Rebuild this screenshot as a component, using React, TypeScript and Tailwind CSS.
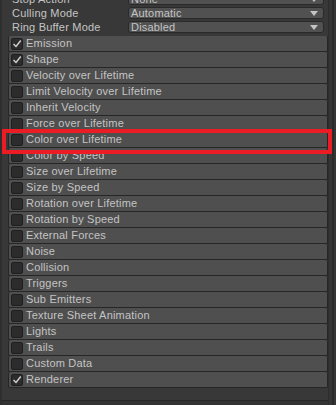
import React from "react";

const modules: { name: string; on: boolean }[] = [
  { name: "Emission", on: true },
  { name: "Shape", on: true },
  { name: "Velocity over Lifetime", on: false },
  { name: "Limit Velocity over Lifetime", on: false },
  { name: "Inherit Velocity", on: false },
  { name: "Force over Lifetime", on: false },
  { name: "Color over Lifetime", on: false },
  { name: "Color by Speed", on: false },
  { name: "Size over Lifetime", on: false },
  { name: "Size by Speed", on: false },
  { name: "Rotation over Lifetime", on: false },
  { name: "Rotation by Speed", on: false },
  { name: "External Forces", on: false },
  { name: "Noise", on: false },
  { name: "Collision", on: false },
  { name: "Triggers", on: false },
  { name: "Sub Emitters", on: false },
  { name: "Texture Sheet Animation", on: false },
  { name: "Lights", on: false },
  { name: "Trails", on: false },
  { name: "Custom Data", on: false },
  { name: "Renderer", on: true },
];

const props = [
  { label: "Stop Action", value: "None" },
  { label: "Culling Mode", value: "Automatic" },
  { label: "Ring Buffer Mode", value: "Disabled" },
];

function Check() {
  return (
    <svg width="10" height="9" viewBox="0 0 10 9" className="block">
      <path d="M1.5 5 L4 7.5 L8.8 1.5" fill="none" stroke="#d4d4d4" strokeWidth="1.4" />
    </svg>
  );
}

function Dropdown({ value }: { value: string }) {
  return (
    <div className="ml-auto mr-[4px] flex h-[12px] w-[196px] items-center rounded-[3px] border border-[#2a2a2a] bg-[#515151] pl-[2px] pr-[5px]">
      <span className="flex-1 leading-none">{value}</span>
      <svg width="8" height="5" viewBox="0 0 8 5">
        <path d="M0 0 H8 L4 5 Z" fill="#c4c4c4" />
      </svg>
    </div>
  );
}

export default function App() {
  return (
    <div
      className="relative flex h-[405px] w-[336px] overflow-hidden bg-[#383838] text-[11px] tracking-[0.2px] text-[#c4c4c4]"
      style={{ fontFamily: "'Liberation Sans', Arial, sans-serif" }}
    >
      {/* inspector column */}
      <div className="flex flex-1 flex-col border-l-2 border-[#2e2e2e]">
        <div className="-mt-[8px] flex flex-col">
          {props.map((p) => (
            <div key={p.label} className="flex h-[14px] items-center pl-[10px]">
              <span className="leading-none">{p.label}</span>
              <Dropdown value={p.value} />
            </div>
          ))}
        </div>

        {/* modules */}
        <div className="ml-[6px] mt-[2px] flex flex-col">
          {modules.map((m) => (
            <div
              key={m.name}
              className="flex h-[16px] items-center gap-[3px] rounded-[2px] border-b border-l border-r border-[#262626] bg-[#4f4f4f] pl-[2px]"
            >
              <div className="flex h-[12px] w-[12px] items-center justify-center rounded-[2px] border border-[#1f1f1f] bg-[#2c2c2c]">
                {m.on && <Check />}
              </div>
              <span className="leading-none">{m.name}</span>
            </div>
          ))}
        </div>

        <div className="mt-[12px] flex-1 border-t border-[#262626] bg-[#323232]" />
      </div>

      {/* scrollbar */}
      <div className="flex w-[8px] border-l border-[#2c2c2c] bg-[#353535]">
        <div className="ml-[3px] w-[2px] bg-[#2a2a2a]" />
      </div>

      {/* highlight */}
      <div className="absolute left-[2px] top-[129px] h-[25px] w-[330px] border-[4px] border-[#ec1c24]" />
    </div>
  );
}
